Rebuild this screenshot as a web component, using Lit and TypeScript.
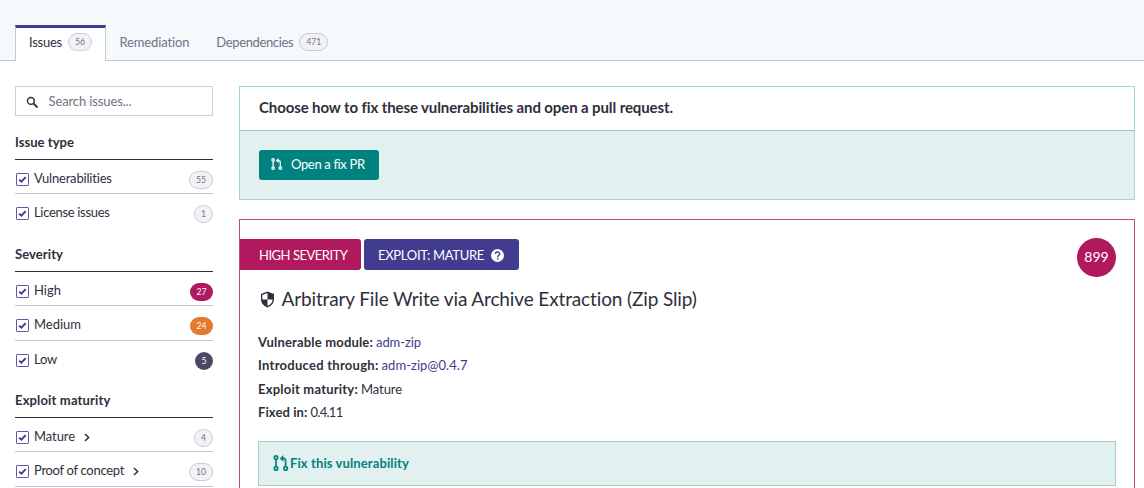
import { LitElement, html, css, svg, nothing } from "lit";
import { customElement, property } from "lit/decorators.js";

/** Text run whose tracking is adjusted so that it fills a given width. */
@customElement("fit-text")
class FitText extends LitElement {
  @property({ type: Number }) width = 0;

  static styles = css`
    :host {
      display: inline-block;
      white-space: nowrap;
    }
  `;

  render() {
    return html`<slot></slot>`;
  }

  updated() {
    const length = (this.textContent ?? "").length;
    const natural = this.getBoundingClientRect().width;
    if (this.width && length) {
      this.style.letterSpacing = `${(this.width - natural) / length}px`;
    }
  }
}

const fit = (text: string, width: number) =>
  html`<fit-text .width=${width}>${text}</fit-text>`;

interface Row {
  label: string;
  width: number;
  count: string;
  tone?: string;
  size?: string;
  more?: boolean;
}

const groups: { title: string; width: number; size?: string; rows: Row[] }[] = [
  {
    title: "Issue type",
    width: 59,
    rows: [
      { label: "Vulnerabilities", width: 78, count: "55" },
      { label: "License issues", width: 75.5, count: "1" },
    ],
  },
  {
    title: "Severity",
    width: 48,
    rows: [
      { label: "High", width: 27, count: "27", tone: "high" },
      { label: "Medium", width: 47, count: "24", tone: "medium", size: "tall" },
      { label: "Low", width: 23, count: "5", tone: "low", size: "short" },
    ],
  },
  {
    title: "Exploit maturity",
    width: 95.5,
    rows: [
      { label: "Mature", width: 41, count: "4", more: true },
      { label: "Proof of concept", width: 90, count: "10", more: true, size: "tall" },
    ],
  },
];

const pullRequest = svg`
  <g fill="none" stroke="currentColor" stroke-width="1.7">
    <circle cx="3" cy="2.6" r="1.7"/><circle cx="3" cy="13.4" r="1.7"/>
    <circle cx="12.6" cy="13.4" r="1.7"/>
    <path d="M3 4.4v7.2M12.6 11.7V5.6q0-2.2-2.2-2.2H9"/>
  </g>
  <path fill="currentColor" d="M10.4 0v6.8L6.7 3.4z"/>`;

@customElement("app-root")
class AppRoot extends LitElement {
  static styles = css`
    :host {
      display: block;
      height: 488px;
      overflow: hidden;
      background: #fff;
      color: #2f2f3b;
      font: 13px/20px Lato, "Open Sans", sans-serif;
    }
    * {
      box-sizing: border-box;
    }
    svg {
      display: block;
      flex: none;
    }
    .header {
      height: 61px;
      padding: 25px 15px 0;
      display: flex;
      background: #f4f9fc;
      border-bottom: 1px solid #c8c8d0;
    }
    .tab {
      height: 35px;
      display: flex;
      align-items: center;
      gap: 6px;
      padding: 0 13.5px 1px;
      color: #727184;
    }
    .tab.first {
      width: 91px;
      height: 36px;
      padding: 0 0 5px 13px;
      border: 1px solid #c8c8d0;
      border-top: 3px solid #3f3d91;
      border-bottom: 0;
      background: #fff;
      color: #2f2f3b;
    }
    .badge {
      height: 18px;
      min-width: 18px;
      padding: 0 6px;
      display: flex;
      align-items: center;
      justify-content: center;
      border: 1px solid #cccbd5;
      border-radius: 9px;
      background: #f2f1f5;
      color: #727184;
      font-size: 8.6px;
      line-height: 16px;
    }
    .badge.high,
    .badge.medium,
    .badge.low {
      border: 0;
      padding: 0 6.5px;
      color: #fff;
    }
    .badge.high {
      background: #b1195f;
    }
    .badge.medium {
      background: #e27b2d;
    }
    .badge.low {
      background: #4b4965;
    }
    .body {
      display: flex;
      gap: 26px;
      padding: 25px 9px 0 15px;
    }
    .side {
      width: 198px;
      flex: none;
    }
    .search {
      height: 30px;
      display: flex;
      align-items: center;
      padding: 0 0 1px 10px;
      gap: 9.5px;
      border: 1px solid #cfced8;
      color: #727184;
    }
    .search svg {
      color: #2f2f3b;
      margin-top: 3px;
    }
    .heading {
      height: 44px;
      padding-top: 16px;
      border-bottom: 1px solid #2f2f3b;
      font-weight: 700;
    }
    .row {
      height: 34px;
      display: flex;
      align-items: flex-start;
      padding-top: 8px;
      border-bottom: 1px solid #c8c8d0;
    }
    .row.last {
      border-bottom-color: transparent;
    }
    .row.tall {
      height: 35px;
    }
    .row.short {
      height: 33px;
    }
    .box {
      margin: 5px 5px 0 1px;
    }
    .chevron {
      margin: 7px 0 0 8px;
    }
    .row .badge {
      margin: 3px 0 0 auto;
    }
    .main {
      flex: 1;
      min-width: 0;
    }
    .choose {
      height: 114px;
      border: 1px solid #a3d5d3;
      background: #e2f0f0;
    }
    .choose-title {
      height: 44px;
      padding: 10px 19px;
      background: #fff;
      border-bottom: 1px solid #8dc9c8;
      font-size: 15px;
      font-weight: 700;
    }
    .open {
      width: 120px;
      height: 30px;
      margin: 19px 0 0 19px;
      display: flex;
      align-items: center;
      gap: 8px;
      padding: 0 0 2px 11px;
      border-radius: 3px;
      background: #00827f;
      color: #fff;
    }
    .issue {
      height: 300px;
      margin-top: 19px;
      padding-top: 19px;
      border: 1px solid #c04a80;
    }
    .top {
      display: flex;
      gap: 3px;
      height: 39px;
    }
    .tag {
      height: 31px;
      display: flex;
      align-items: center;
      border-radius: 3px;
      color: #fff;
    }
    .tag.severity {
      width: 121px;
      padding-left: 19px;
      border-radius: 0 3px 3px 0;
      background: #b1195f;
    }
    .tag.exploit {
      width: 155px;
      padding-left: 14px;
      gap: 7px;
      background: #423c91;
    }
    .tag svg {
      margin-top: 1px;
    }
    .score {
      width: 39px;
      height: 39px;
      margin: -1px 18px 0 auto;
      border-radius: 50%;
      background: #b1195f;
      color: #fff;
      font-size: 14px;
      line-height: 38px;
      text-align: center;
    }
    .title {
      display: flex;
      align-items: center;
      gap: 6.5px;
      height: 26px;
      margin: 8px 0 0 20px;
      font-size: 19px;
      line-height: 26px;
    }
    .facts {
      margin: 19px 0 0 18px;
    }
    .fact {
      display: flex;
      gap: 3px;
      height: 23.3px;
      line-height: 22px;
    }
    .name {
      font-weight: 700;
    }
    .link {
      color: #423c91;
    }
    .fix {
      height: 45px;
      margin: 17px 18px 0;
      padding: 0 0 2px 14px;
      display: flex;
      align-items: center;
      gap: 1px;
      border: 1px solid #9dd0ce;
      background: #e2f0f0;
      color: #00827f;
      font-weight: 700;
    }
    .fix svg {
      margin-top: 1px;
    }
  `;

  private row(row: Row, last: boolean) {
    return html`<div class="row ${row.size ?? ""} ${last ? "last" : ""}">
      <svg class="box" width="13" height="13" viewBox="0 0 13 13">
        <rect x=".5" y=".5" width="12" height="12" rx=".6" fill="#fff" stroke="#5c58a8" />
        <path d="M3.2 6.6l2.2 2.1 4.3-4.6" fill="none" stroke="#423c91" stroke-width="2" />
      </svg>
      ${fit(row.label, row.width)}
      ${row.more
        ? html`<svg class="chevron" width="8" height="9" viewBox="0 0 8 9">
            <path d="M2 1l3.6 3.5L2 8" fill="none" stroke="#2f2f3b" stroke-width="1.5" />
          </svg>`
        : nothing}
      <span class="badge ${row.tone ?? ""}">${row.count}</span>
    </div>`;
  }

  private fact(name: string, nameWidth: number, value: string, width: number, link = false) {
    return html`<div class="fact">
      <span class="name">${fit(name, nameWidth)}</span>
      <span class=${link ? "link" : ""}>${fit(value, width)}</span>
    </div>`;
  }

  render() {
    return html`
      <div class="header">
        <div class="tab first">${fit("Issues", 33)}<span class="badge">56</span></div>
        <div class="tab">${fit("Remediation", 70)}</div>
        <div class="tab">${fit("Dependencies", 77)}<span class="badge">471</span></div>
      </div>
      <div class="body">
        <div class="side">
          <div class="search">
            <svg width="13" height="13" viewBox="0 0 13 13">
              <circle cx="4.9" cy="4.9" r="3.4" fill="none" stroke="currentColor" stroke-width="1.5" />
              <path d="M7.5 7.5l4 4" stroke="currentColor" stroke-width="1.8" />
            </svg>
            ${fit("Search issues...", 83)}
          </div>
          ${groups.map(
            (g) => html`<div class="heading">${fit(g.title, g.width)}</div>
              ${g.rows.map((r, i) =>
                this.row(r, i === g.rows.length - 1 && g.title !== "Exploit maturity"),
              )}`,
          )}
        </div>
        <div class="main">
          <div class="choose">
            <div class="choose-title">
              ${fit("Choose how to fix these vulnerabilities and open a pull request.", 414)}
            </div>
            <div class="open">
              <svg width="13" height="12" viewBox="0 0 15 16">${pullRequest}</svg>
              ${fit("Open a fix PR", 73.5)}
            </div>
          </div>
          <div class="issue">
            <div class="top">
              <div class="tag severity">${fit("HIGH SEVERITY", 88.5)}</div>
              <div class="tag exploit">
                ${fit("EXPLOIT: MATURE", 106)}
                <svg width="13" height="13" viewBox="0 0 12 12">
                  <circle cx="6" cy="6" r="6" fill="#fff" />
                  <path
                    d="M4.1 4.7C4.1 2.2 8 2.2 8 4.5 8 5.8 6.1 5.8 6.1 7.5M6.1 8.3v1.4"
                    fill="none" stroke="#423c91" stroke-width="1.3" />
                </svg>
              </div>
              <div class="score">899</div>
            </div>
            <div class="title">
              <svg width="15" height="17" viewBox="0 0 15 17">
                <path d="M7.5 .5L14 3v5.2q0 5.6-6.5 8.3Q1 13.8 1 8.2V3z" fill="#2f2f3b" />
                <path d="M7.5 2v6.4H2.3V3.9zM7.5 8.4h5.2q-.4 4.4-5.2 6.6z" fill="#fff" />
              </svg>
              ${fit("Arbitrary File Write via Archive Extraction (Zip Slip)", 415.5)}
            </div>
            <div class="facts">
              ${this.fact("Vulnerable module:", 115, "adm-zip", 45, true)}
              ${this.fact("Introduced through:", 120.5, "adm-zip@0.4.7", 86, true)}
              ${this.fact("Exploit maturity:", 100, "Mature", 41)}
              ${this.fact("Fixed in:", 49.5, "0.4.11", 32)}
            </div>
            <div class="fix">
              <svg width="16" height="16" viewBox="0 0 16 16">${pullRequest}</svg>
              ${fit("Fix this vulnerability", 119)}
            </div>
          </div>
        </div>
      </div>
    `;
  }
}
